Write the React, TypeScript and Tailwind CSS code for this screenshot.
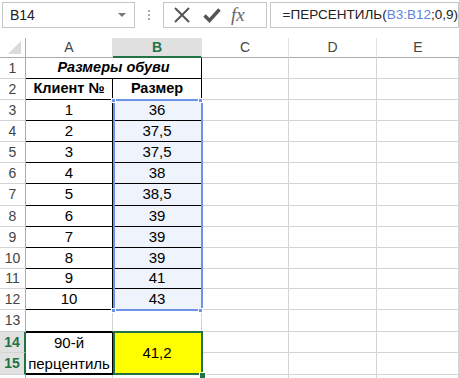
const sizes = ['36', '37,5', '37,5', '38', '38,5', '39', '39', '39', '41', '43']

const font = { fontFamily: '"Liberation Sans", Arial, sans-serif' }

function RowHead({ n, active }: { n?: number; active?: boolean }) {
  return (
    <div
      className={
        active
          ? 'flex items-center justify-center border-b border-b-[#d4d4d4] border-r-2 border-r-[#217346] bg-[#e1e1e1] text-[14px] font-bold text-[#217346]'
          : 'flex items-center justify-center border-b border-b-[#d4d4d4] border-r border-r-[#ababab] text-[14px] text-[#444]'
      }
    >
      {n}
    </div>
  )
}

function Blank() {
  return <div className="border-b border-r border-[#d4d4d4]" />
}

function Empty3() {
  return (
    <>
      <Blank />
      <Blank />
      <Blank />
    </>
  )
}

export default function App() {
  return (
    <div className="relative h-[378px] w-[459px] overflow-hidden bg-white text-black" style={font}>
      {/* formula bar */}
      <div className="flex h-[30px] items-start pt-[2px]">
        <div className="ml-[2px] flex h-[26px] w-[140px] items-center justify-between border border-[#c6c6c6] pl-[7px] pr-[8px] text-[14px] text-[#222]">
          <span>B14</span>
          <span className="h-0 w-0 border-x-[4px] border-t-[4px] border-x-transparent border-t-[#777]" />
        </div>
        <div className="flex h-[26px] w-[30px] flex-col items-center justify-center gap-[2px]">
          <span className="h-[2px] w-[2px] bg-[#aaa]" />
          <span className="h-[2px] w-[2px] bg-[#aaa]" />
          <span className="h-[2px] w-[2px] bg-[#aaa]" />
        </div>
        <div className="flex h-[26px] w-[110px] items-center border border-[#c6c6c6]">
          <svg width="18" height="18" viewBox="0 0 18 18" className="ml-[9px]">
            <path d="M2 2 L16 16 M16 2 L2 16" stroke="#555" strokeWidth="2" fill="none" />
          </svg>
          <svg width="18" height="16" viewBox="0 0 18 16" className="ml-[12px]">
            <path d="M1.5 8.5 L6.5 13.5 L16.5 2.5" stroke="#555" strokeWidth="3.4" fill="none" />
          </svg>
          <span
            className="ml-[10px] text-[19px] italic text-[#666]"
            style={{ fontFamily: '"Liberation Serif", "Times New Roman", serif' }}
          >
            fx
          </span>
        </div>
        <div className="ml-[3px] flex h-[26px] flex-1 items-center border border-[#c6c6c6] pl-[12px] text-[13.5px] text-[#222]">
          <span>=ПЕРСЕНТИЛЬ(</span>
          <span className="text-[#5b84dd]">B3:B12</span>
          <span>;0,9)</span>
        </div>
      </div>

      <div className="h-[8px]" />

      {/* sheet */}
      <div className="relative grid grid-cols-[26px_87px_89px_87px_88px_1fr] grid-rows-[20px_21px_21px_21px_21px_21px_21px_22px_21px_21px_21px_20px_21px_22px_21px_22px_21px] text-[14px]">
        {/* column headers */}
        <div className="relative border-b border-r border-b-[#ababab] border-r-[#ababab]">
          <span className="absolute bottom-[3px] right-[4px] h-0 w-0 border-b-[13px] border-l-[13px] border-b-[#dadada] border-l-transparent" />
        </div>
        <div className="flex items-center justify-center border-b border-r border-b-[#ababab] border-r-[#e1e1e1] text-[#444]">A</div>
        <div className="flex items-center justify-center border-b-2 border-r border-b-[#217346] border-r-[#e1e1e1] bg-[#e1e1e1] font-bold text-[#217346]">B</div>
        <div className="flex items-center justify-center border-b border-r border-b-[#ababab] border-r-[#e1e1e1] text-[#444]">C</div>
        <div className="flex items-center justify-center border-b border-r border-b-[#ababab] border-r-[#e1e1e1] text-[#444]">D</div>
        <div className="flex items-center justify-center border-b border-b-[#ababab] text-[#444]">E</div>

        {/* row 1 */}
        <RowHead n={1} />
        <div className="col-span-2 flex items-center justify-center border-b border-r border-black text-[14.5px] font-bold italic">
          Размеры обуви
        </div>
        <Empty3 />

        {/* row 2 */}
        <RowHead n={2} />
        <div className="flex items-center justify-center border-b border-r border-black text-[14.5px] font-bold">Клиент №</div>
        <div className="flex items-center justify-center border-b border-r border-black text-[14.5px] font-bold">Размер</div>
        <Empty3 />

        {/* rows 3-12 */}
        {sizes.map((s, i) => (
          <div key={i} className="contents">
            <RowHead n={i + 3} />
            <div className="flex items-center justify-center border-b border-r border-black text-[15px]">{i + 1}</div>
            <div className="flex items-center justify-center border-b border-r border-black bg-[#eef3fc] text-[15px]">{s}</div>
            <Empty3 />
          </div>
        ))}

        {/* row 13 */}
        <RowHead n={13} />
        <div className="border-b border-r border-b-black border-r-[#d4d4d4]" />
        <Blank />
        <Empty3 />

        {/* rows 14-15 */}
        <RowHead n={14} active />
        <div className="row-span-2 flex flex-col items-center justify-center border-b-2 border-r border-t border-black text-[15px] leading-[21px]">
          <span>90-й</span>
          <span>перцентиль</span>
        </div>
        <div className="row-span-2 flex items-center justify-center border-b border-r border-[#d4d4d4] bg-[#ffff00] text-[15px]">41,2</div>
        <Empty3 />
        <RowHead n={15} active />
        <Empty3 />

        {/* row 16, only its top edge shows */}
        <RowHead />
        <Blank />
        <Blank />
        <Empty3 />

        {/* range finder B3:B12 */}
        <div className="absolute left-[113px] top-[61px] h-[212px] w-[90px] border-2 border-[#6d93e8]" />
        <span className="absolute left-[111px] top-[60px] h-[5px] w-[5px] border border-white bg-[#6d93e8]" />
        <span className="absolute left-[198px] top-[60px] h-[5px] w-[5px] border border-white bg-[#6d93e8]" />
        <span className="absolute left-[111px] top-[270px] h-[5px] w-[5px] border border-white bg-[#6d93e8]" />
        <span className="absolute left-[198px] top-[270px] h-[5px] w-[5px] border border-white bg-[#6d93e8]" />

        {/* active cell B14 */}
        <div className="absolute left-[113px] top-[293px] h-[44px] w-[90px] border-2 border-[#217346]" />
        <span className="absolute left-[199px] top-[334px] h-[7px] w-[7px] border border-white bg-[#217346]" />
      </div>
    </div>
  )
}
